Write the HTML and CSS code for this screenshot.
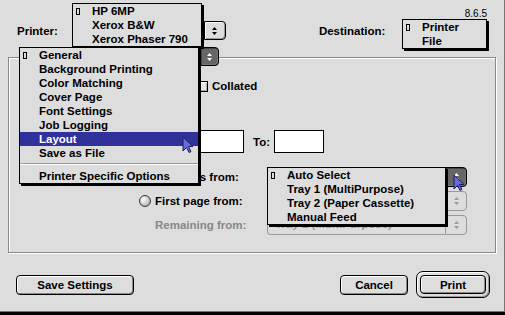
FILE: index.html
```html
<!DOCTYPE html>
<html lang="en">
<head>
  <meta charset="UTF-8">
  <title>Print</title>
  <link rel="stylesheet" href="styles.css">
</head>
<body>
  <div class="win">
    <div class="ver">8.6.5</div>
    <div class="head">
      <span class="lbl">Printer:</span>
      <div class="popup pr-pop">
        <span class="ptext"></span>
        <span class="parrow"><svg width="7" height="10" viewBox="0 0 7 10"><path d="M3.5 1L6 4H1z M1 6h5L3.5 9z"/></svg></span>
      </div>
      <span class="lbl dest-lbl">Destination:</span>
      <div class="popup dest-pop">
        <span class="ptext"></span>
        <span class="parrow"><svg width="7" height="10" viewBox="0 0 7 10"><path d="M3.5 1L6 4H1z M1 6h5L3.5 9z"/></svg></span>
      </div>
    </div>

    <div class="group">
      <div class="popup tab-pop pressed">
        <span class="ptext"></span>
        <span class="parrow"><svg width="7" height="10" viewBox="0 0 7 10"><path d="M3.5 1L6 4H1z M1 6h5L3.5 9z"/></svg></span>
      </div>

      <!-- copies (mostly under the open menu) -->
      <div class="row r-copies">
        <div class="copies"><span class="field short"></span></div>
        <span class="check"></span>
        <span>Collated</span>
      </div>

      <div class="row r-pages">
        <div class="pages">
          <span class="radio on"></span>
          <span class="radio"></span>
        </div>
        <span class="field"></span>
        <span class="to">To:</span>
        <span class="field to-field"></span>
      </div>

      <div class="row src">
        <span class="radio on"></span>
        <span class="slbl">All pages from:</span>
        <div class="popup wide pressed">
          <span class="ptext"></span>
          <span class="parrow"><svg width="7" height="10" viewBox="0 0 7 10"><path d="M3.5 1L6 4H1z M1 6h5L3.5 9z"/></svg></span>
        </div>
      </div>
      <div class="row src">
        <span class="radio"></span>
        <span class="slbl">First page from:</span>
        <div class="popup wide off">
          <span class="ptext"></span>
          <span class="parrow"><svg width="7" height="10" viewBox="0 0 7 10"><path d="M3.5 1L6 4H1z M1 6h5L3.5 9z"/></svg></span>
        </div>
      </div>
      <div class="row src">
        <span class="radio-gap"></span>
        <span class="slbl dim">Remaining from:</span>
        <div class="popup wide off">
          <span class="ptext">Tray 1 (MultiPurpose)</span>
          <span class="parrow"><svg width="7" height="10" viewBox="0 0 7 10"><path d="M3.5 1L6 4H1z M1 6h5L3.5 9z"/></svg></span>
        </div>
      </div>
    </div>

    <div class="btns">
      <button class="btn save">Save Settings</button>
      <button class="btn cancel">Cancel</button>
      <div class="deflt"><button class="btn print">Print</button></div>
    </div>

    <!-- open popup menus -->
    <div class="menu m-printer">
      <div class="item"><span class="mk"><i></i></span>HP 6MP</div>
      <div class="item"><span class="mk"></span>Xerox B&amp;W</div>
      <div class="item"><span class="mk"></span>Xerox Phaser 790</div>
    </div>

    <div class="menu m-dest">
      <div class="item"><span class="mk"><i></i></span>Printer</div>
      <div class="item"><span class="mk"></span>File</div>
    </div>

    <div class="menu m-tab">
      <div class="item"><span class="mk"><i></i></span>General</div>
      <div class="item"><span class="mk"></span>Background Printing</div>
      <div class="item"><span class="mk"></span>Color Matching</div>
      <div class="item"><span class="mk"></span>Cover Page</div>
      <div class="item"><span class="mk"></span>Font Settings</div>
      <div class="item"><span class="mk"></span>Job Logging</div>
      <div class="item hi"><span class="mk"></span>Layout</div>
      <div class="item"><span class="mk"></span>Save as File</div>
      <div class="sep"></div>
      <div class="item"><span class="mk"></span>Printer Specific Options</div>
    </div>

    <div class="menu m-paper">
      <div class="item"><span class="mk"><i></i></span>Auto Select</div>
      <div class="item"><span class="mk"></span>Tray 1 (MultiPurpose)</div>
      <div class="item"><span class="mk"></span>Tray 2 (Paper Cassette)</div>
      <div class="item"><span class="mk"></span>Manual Feed</div>
    </div>

    <svg class="cursor c-tab" width="13" height="18" viewBox="0 0 13 18"><path d="M1 1V15L4.5 11.5L7 16.5L9 15.5L6.5 10.5H11Z"/></svg>
    <svg class="cursor c-paper" width="13" height="18" viewBox="0 0 13 18"><path d="M1 1V15L4.5 11.5L7 16.5L9 15.5L6.5 10.5H11Z"/></svg>
  </div>
</body>
</html>
```

FILE: styles.css
```css
body { margin: 0; background: #000; font: bold 11.5px/14px "Liberation Sans", Arial, sans-serif; color: #000; }
.win { position: relative; width: 500px; height: 311px; padding-right: 4px; background: #ddd; border-right: 1px solid #777; border-bottom: 1px solid #777; overflow: hidden; }

.ver { height: 12px; margin-top: 8px; padding-right: 13px; text-align: right; font: normal 10px/12px "Liberation Sans", Arial, sans-serif; }
.head { display: flex; align-items: center; height: 19px; margin-top: 1px; padding-left: 17px; }
.lbl { white-space: nowrap; }
.pr-pop { margin-left: 14px; width: 154px; }
.dest-lbl { margin-left: 93px; }
.dest-pop { margin-left: 17px; width: 85px; }

/* popup buttons */
.popup { display: flex; height: 19px; box-sizing: border-box; }
.ptext { flex: 1; padding-left: 7px; border: 1px solid #000; border-right: 0; border-radius: 4px 0 0 4px; background: #ddd; box-shadow: inset 1px 1px 0 #fff; white-space: nowrap; overflow: hidden; line-height: 17px; }
.parrow { width: 20px; display: flex; align-items: center; justify-content: center; border: 1px solid #000; border-radius: 0 4px 4px 0; background: #ddd; box-shadow: inset 1px 1px 0 #fff, inset -1px -1px 0 #999; }
.parrow svg { fill: #000; }
.pressed .parrow { background: #666; box-shadow: inset 1px 1px 0 #444, inset -1px -1px 0 #777; }
.pressed .parrow svg { fill: #fff; }
.off .ptext, .off .parrow { border-color: #999; color: #999; box-shadow: none; }
.off .parrow svg { fill: #999; }

/* group box */
.group { margin: 17px 0 0 8px; width: 488px; height: 196px; box-sizing: border-box; border: 1px solid #888; box-shadow: 1px 1px 0 #fff, inset 1px 1px 0 #fff; }
.tab-pop { margin: -11px 0 0 10px; width: 200px; }
.tab-pop .parrow { width: 19px; box-sizing: border-box; }

.row { display: flex; align-items: center; }
.r-copies { margin-top: 9px; height: 22px; }
.copies { width: 188px; display: flex; align-items: center; padding-left: 80px; box-sizing: border-box; }
.check { width: 11px; height: 11px; box-sizing: border-box; margin-right: 4px; border: 1px solid #000; background: #e8e8e8; box-shadow: inset 1px 1px 0 #fff, inset -1px -1px 0 #aaa; }

.r-pages { margin-top: 33px; height: 23px; }
.pages { width: 185px; display: flex; align-items: center; gap: 40px; padding-left: 60px; box-sizing: border-box; }
.field { width: 50px; height: 23px; box-sizing: border-box; border: 1px solid #000; background: #fff; }
.field.short { width: 40px; height: 22px; }
.to { margin-left: 9px; width: 21px; }

.src { height: 20px; margin-top: 4px; padding-left: 130px; }
.r-pages + .src { margin-top: 14px; }
.radio, .radio-gap { width: 12px; height: 12px; margin-right: 4px; box-sizing: border-box; flex: none; }
.radio { border: 1px solid #333; border-radius: 50%; background: radial-gradient(circle at 35% 35%, #fff 0, #ddd 35%, #999 100%); }
.radio.on { background: radial-gradient(circle, #000 0 2px, #bbb 3px, #888 100%); }
.slbl { width: 112px; white-space: nowrap; }
.dim { color: #888; }
.wide { width: 200px; height: 20px; }

/* bottom buttons */
.btns { display: flex; align-items: center; height: 27px; margin-top: 18px; padding-left: 16px; }
.btn { font: inherit; color: #000; height: 20px; box-sizing: border-box; border: 1px solid #000; border-radius: 4px; background: #ddd; box-shadow: inset 1px 1px 0 #fff, inset -1px -1px 0 #888; padding: 0; }
.save { width: 118px; }
.cancel { width: 68px; margin-left: 206px; }
.deflt { margin-left: 8px; width: 74px; height: 27px; box-sizing: border-box; padding: 3px; border: 1px solid #000; border-radius: 7px; box-shadow: inset 1px 1px 0 #fff, inset -1px -1px 0 #999; }
.print { width: 66px; height: 19px; display: block; }

/* open menus */
.menu { position: absolute; background: #ddd; border: 1px solid #000; box-shadow: 2px 2px 0 #000; }
.item { display: flex; height: 14px; line-height: 14px; white-space: nowrap; }
.mk { width: 19px; flex: none; }
.mk i { display: block; width: 4px; height: 7px; box-sizing: border-box; margin: 4px 0 0 3px; border: 1px solid #000; }
.hi { background: #31319c; color: #fff; }
.sep { height: 6px; }
.sep::before { content: ""; display: block; margin-top: 3px; border-top: 1px solid #999; border-bottom: 1px solid #fff; }

.m-printer { left: 72px; top: 3px; width: 128px; }
.m-dest { left: 402px; top: 19px; width: 83px; }
.m-tab { left: 19px; top: 47px; width: 178px; }
.m-paper { left: 267px; top: 167px; width: 177px; }

.cursor { position: absolute; fill: #6a6ad8; stroke: #1c1c5c; stroke-width: 1; }
.c-tab { left: 182px; top: 136px; }
.c-paper { left: 453px; top: 174px; }
```
